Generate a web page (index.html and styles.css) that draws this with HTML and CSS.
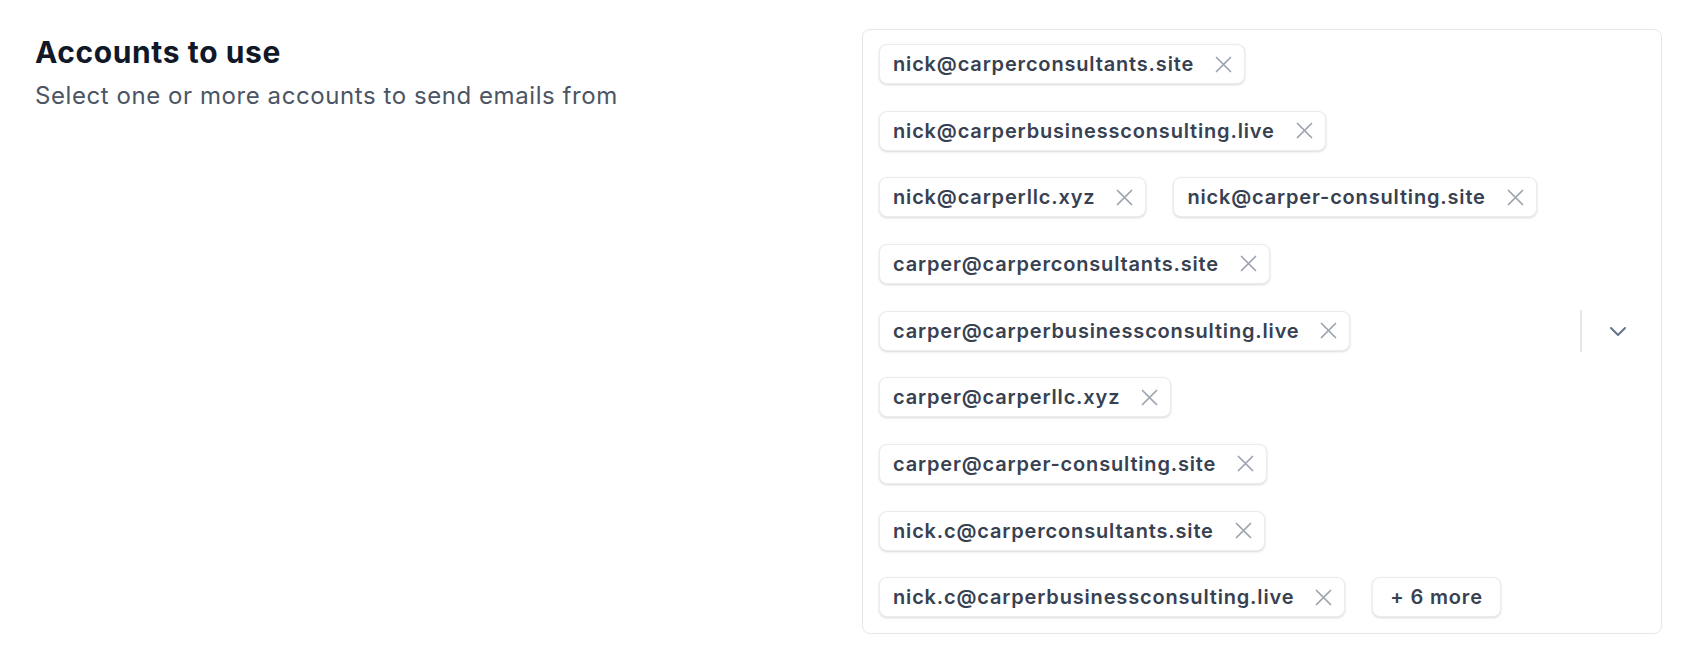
FILE: index.html
```html
<!DOCTYPE html>
<html lang="en">
<head>
<meta charset="utf-8">
<title>Accounts to use</title>
<link rel="stylesheet" href="styles.css">
</head>
<body>
<div class="page">
  <div class="intro">
    <h2 class="title">Accounts to use</h2>
    <p class="subtitle">Select one or more accounts to send emails from</p>
  </div>
  <div class="select">
    <div class="values">
      <span class="chip"><span class="chip-label">nick@carperconsultants.site</span><span class="chip-remove"><svg viewBox="0 0 17 17" width="17" height="17"><path d="M1.5 1.5L15.5 15.5M15.5 1.5L1.5 15.5"/></svg></span></span>
      <span class="chip"><span class="chip-label">nick@carperbusinessconsulting.live</span><span class="chip-remove"><svg viewBox="0 0 17 17" width="17" height="17"><path d="M1.5 1.5L15.5 15.5M15.5 1.5L1.5 15.5"/></svg></span></span>
      <span class="chip"><span class="chip-label">nick@carperllc.xyz</span><span class="chip-remove"><svg viewBox="0 0 17 17" width="17" height="17"><path d="M1.5 1.5L15.5 15.5M15.5 1.5L1.5 15.5"/></svg></span></span>
      <span class="chip"><span class="chip-label">nick@carper-consulting.site</span><span class="chip-remove"><svg viewBox="0 0 17 17" width="17" height="17"><path d="M1.5 1.5L15.5 15.5M15.5 1.5L1.5 15.5"/></svg></span></span>
      <span class="chip"><span class="chip-label">carper@carperconsultants.site</span><span class="chip-remove"><svg viewBox="0 0 17 17" width="17" height="17"><path d="M1.5 1.5L15.5 15.5M15.5 1.5L1.5 15.5"/></svg></span></span>
      <span class="chip"><span class="chip-label">carper@carperbusinessconsulting.live</span><span class="chip-remove"><svg viewBox="0 0 17 17" width="17" height="17"><path d="M1.5 1.5L15.5 15.5M15.5 1.5L1.5 15.5"/></svg></span></span>
      <span class="chip"><span class="chip-label">carper@carperllc.xyz</span><span class="chip-remove"><svg viewBox="0 0 17 17" width="17" height="17"><path d="M1.5 1.5L15.5 15.5M15.5 1.5L1.5 15.5"/></svg></span></span>
      <span class="chip"><span class="chip-label">carper@carper-consulting.site</span><span class="chip-remove"><svg viewBox="0 0 17 17" width="17" height="17"><path d="M1.5 1.5L15.5 15.5M15.5 1.5L1.5 15.5"/></svg></span></span>
      <span class="chip"><span class="chip-label">nick.c@carperconsultants.site</span><span class="chip-remove"><svg viewBox="0 0 17 17" width="17" height="17"><path d="M1.5 1.5L15.5 15.5M15.5 1.5L1.5 15.5"/></svg></span></span>
      <span class="chip"><span class="chip-label">nick.c@carperbusinessconsulting.live</span><span class="chip-remove"><svg viewBox="0 0 17 17" width="17" height="17"><path d="M1.5 1.5L15.5 15.5M15.5 1.5L1.5 15.5"/></svg></span></span>
      <span class="chip chip-more">+ 6 more</span>
    </div>
    <div class="indicators">
      <span class="separator"></span>
      <span class="dropdown"><svg viewBox="0 0 20 20" width="20" height="20"><path d="M3 7L10 14L17 7"/></svg></span>
    </div>
  </div>
</div>
</body>
</html>
```

FILE: styles.css
```css
* { box-sizing: border-box; }
body {
  margin: 0;
  background: #ffffff;
  font-family: "Inter", "Liberation Sans", sans-serif;
  color: #111827;
}
.page {
  display: grid;
  grid-template-columns: 800px 800px;
  column-gap: 27px;
  padding: 29px 26px 0 35px;
}
.intro { padding-top: 5px; }
.title {
  margin: 0;
  font-size: 30px;
  line-height: 36px;
  font-weight: 700;
  color: #111827;
  letter-spacing: 0.02em;
}
.subtitle {
  margin: 10px 0 0;
  font-size: 24px;
  line-height: 32px;
  font-weight: 400;
  color: #4b5563;
  letter-spacing: 0.57px;
}
.select {
  display: flex;
  border: 1px solid #e5e7eb;
  border-radius: 8px;
  padding: 14px 7px 16px 16px;
  background: #fff;
}
.values {
  flex: 1;
  display: flex;
  flex-wrap: wrap;
  align-content: flex-start;
  gap: 26.67px 27px;
}
.chip {
  display: inline-flex;
  align-items: center;
  height: 40px;
  padding: 0 12px 0 13px;
  gap: 21px;
  border: 1px solid #ececef;
  border-radius: 8px;
  background: #fff;
  box-shadow: 0 1px 3px rgba(16, 24, 40, 0.10), 0 1px 2px rgba(16, 24, 40, 0.06);
  font-size: 20px;
  font-weight: 600;
  color: #374151;
  letter-spacing: 0.83px;
  white-space: nowrap;
}
.chip-remove { display: flex; }
.chip-remove svg { fill: none; stroke: #9ca3af; stroke-width: 1.7; stroke-linecap: round; }
.chip-more { padding: 0 17px; }
.indicators {
  align-self: center;
  display: flex;
  align-items: center;
}
.separator { width: 2px; height: 42px; background: #e5e7eb; }
.dropdown { width: 72px; display: flex; justify-content: center; }
.dropdown svg { fill: none; stroke: #64748b; stroke-width: 2; stroke-linecap: round; stroke-linejoin: round; }
```
